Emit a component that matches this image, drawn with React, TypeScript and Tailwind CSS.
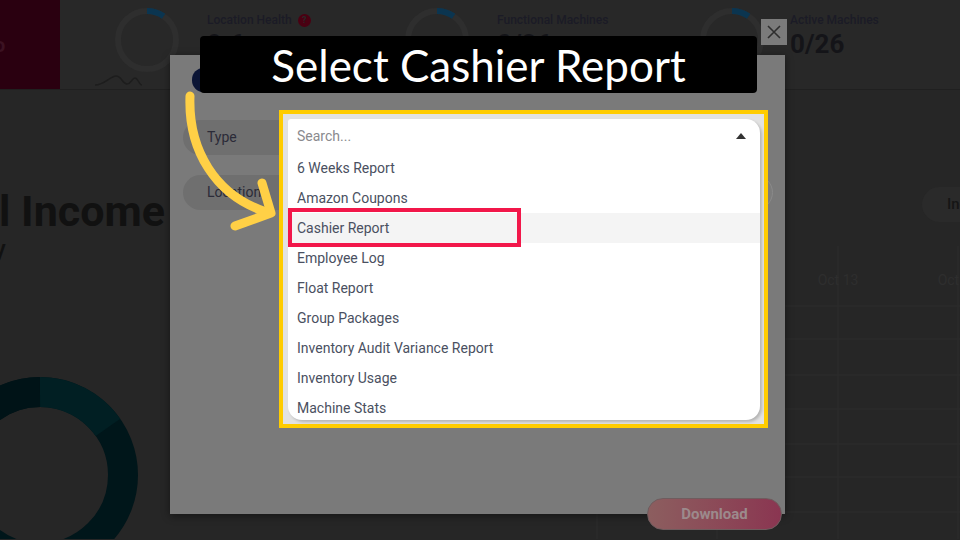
import React from 'react'

const items = [
  '6 Weeks Report',
  'Amazon Coupons',
  'Cashier Report',
  'Employee Log',
  'Float Report',
  'Group Packages',
  'Inventory Audit Variance Report',
  'Inventory Usage',
  'Machine Stats',
]

function Donut({ width, cx }: { width: number; cx: number }) {
  const r = 29
  const a = (35 * Math.PI) / 180
  return (
    <svg width={width} height={90} className="shrink-0">
      <circle cx={cx} cy={40} r={r} fill="none" stroke="#2e2e2e" strokeWidth={6} />
      <path
        d={`M${cx} ${40 - r} A${r} ${r} 0 0 1 ${cx + r * Math.sin(a)} ${40 - r * Math.cos(a)}`}
        fill="none"
        stroke="#0b3550"
        strokeWidth={6}
      />
    </svg>
  )
}

function StatLabel({ label, value, help }: { label: string; value: string; help?: boolean }) {
  return (
    <div className="flex flex-col pt-[12px]">
      <div className="flex items-center gap-[6px] text-[12px] font-medium leading-[16px] text-[#1b1b26]">
        {label}
        {help && (
          <span className="flex h-[13px] w-[13px] items-center justify-center rounded-full bg-[#4a0012] text-[9px] font-bold text-[#282828]">
            ?
          </span>
        )}
      </div>
      <div className="mt-[3px] text-[26px] font-bold leading-none text-[#141418]">{value}</div>
    </div>
  )
}

export default function App() {
  return (
    <div className="relative h-[540px] w-[960px] overflow-hidden bg-[#262626] font-['Roboto',sans-serif]">
      {/* dimmed dashboard */}
      <div className="flex h-[90px] border-b border-[#202020] bg-[#282828]">
        <div className="flex w-[60px] shrink-0 items-center bg-[#2a0010]">
          <span className="ml-[-6px] text-[20px] font-bold text-[#3b1222]">o</span>
        </div>
        <svg width={147} height={90} className="shrink-0">
          <circle cx={87} cy={40} r={29} fill="none" stroke="#2e2e2e" strokeWidth={6} />
          <path d="M87 11 A29 29 0 0 1 103.6 16.2" fill="none" stroke="#0b3550" strokeWidth={6} />
          <path
            d="M35 85 C45 85 50 76 56 76 C62 76 62 84 67 84 C71 84 72 78 75 78 C78 78 79 85 82 85"
            fill="none"
            stroke="#1d1d1d"
            strokeWidth={1.5}
          />
        </svg>
        <div className="w-[195px] shrink-0">
          <StatLabel label="Location Health" value="9.6" help />
        </div>
        <Donut width={95} cx={35} />
        <div className="w-[203px] shrink-0">
          <StatLabel label="Functional Machines" value="0/26" />
        </div>
        <Donut width={90} cx={32} />
        <StatLabel label="Active Machines" value="0/26" />
      </div>

      <div className="flex h-[449px]">
        <div className="flex w-[200px] shrink-0 flex-col">
          <div className="ml-[-1px] mt-[95px] whitespace-nowrap text-[43px] font-bold leading-[53px] text-[#111]">
            l Income
          </div>
          <div className="ml-[-6px] mt-[-4px] text-[24px] font-medium leading-[30px] text-[#111]">y</div>
          <svg width={200} height={165} className="mt-auto">
            <circle cx={40} cy={101} r={83} fill="none" stroke="#00161a" strokeWidth={30} />
            <path d="M40 18 A83 83 0 0 1 108 53.4" fill="none" stroke="#011f23" strokeWidth={30} />
            <path d="M40 18 A83 83 0 0 0 -20 44" fill="none" stroke="#001317" strokeWidth={30} />
          </svg>
        </div>
        <div className="flex flex-1 flex-col">
          <div className="mr-[-60px] mt-[97px] flex h-[36px] w-[98px] items-center self-end rounded-full bg-[#2a2a2a] pl-[25px] text-[15px] font-medium text-[#151515]">
            Income
          </div>
          <svg width={760} height={317} className="shrink-0">
            {[397, 517, 638, 758].map((x) => (
              <line key={x} x1={x} y1={24} x2={x} y2={317} stroke="#2c2c2c" strokeWidth={1} />
            ))}
            {[84, 117, 153, 187, 222, 255, 290].map((y) => (
              <line key={y} x1={360} y1={y} x2={760} y2={y} stroke="#2c2c2c" strokeWidth={1} />
            ))}
            <text x={638} y={63} textAnchor="middle" fontSize={14} fill="#2e2e2e" fontFamily="Roboto">
              Oct 13
            </text>
            <text x={758} y={63} textAnchor="middle" fontSize={14} fill="#2e2e2e" fontFamily="Roboto">
              Oct 14
            </text>
          </svg>
        </div>
      </div>

      {/* modal */}
      <div className="absolute left-[170px] top-[55px] flex h-[459px] w-[615px] flex-col bg-[#7a7a7a] px-[13px] pt-[13px] shadow-[0_2px_8px_rgba(0,0,0,0.45)]">
        <div className="ml-[9px] h-[24px] w-[23px] rounded-full bg-[#0b1535]" />
        <div className="mt-[28px] flex flex-col gap-[20px]">
          <div className="flex h-[35px] w-[580px]">
            <div className="flex w-[107px] items-center rounded-l-full bg-[#6f6f6f] pl-[24px] text-[14px] text-[#2b2b38]">
              Type
            </div>
            <div className="flex-1 rounded-r-full border border-[#8a8a8a] bg-[#7c7c7c]" />
          </div>
          <div className="flex h-[35px] w-[590px]">
            <div className="flex w-[107px] items-center rounded-l-full bg-[#6f6f6f] pl-[24px] text-[14px] text-[#2b2b38]">
              Location
            </div>
            <div className="flex-1 rounded-r-full border border-[#8a8a8a] bg-[#7c7c7c]" />
          </div>
        </div>
        <button className="mb-[-16px] mr-[-10px] mt-auto flex h-[32px] w-[135px] items-center justify-center self-end rounded-full border border-[#6f5c5e] bg-linear-to-r from-[#8c5e5f] to-[#8a3551] text-[15px] font-bold text-[#9c8a8c]">
          Download
        </button>
      </div>

      <div className="absolute left-[761px] top-[19px] flex h-[26px] w-[26px] items-center justify-center bg-[#7b7b7b]">
        <svg width={14} height={14} viewBox="0 0 14 14">
          <path d="M1 1 L13 13 M13 1 L1 13" stroke="#2e2e2e" strokeWidth={1.6} />
        </svg>
      </div>

      {/* tutorial overlay */}
      <div className="absolute left-[200px] top-[36px] flex h-[57px] w-[557px] items-center justify-center rounded-[4px] bg-black font-['Lato',sans-serif] text-[44px] text-white">
        Select Cashier Report
      </div>

      <div className="absolute left-[279px] top-[110px] h-[318px] w-[489px] border-[4px] border-[#ffcc00] bg-[#e2e2e2] pb-[4px] pl-[5px] pr-[4px] pt-[5px]">
        <div className="h-full overflow-hidden rounded-b-[14px] rounded-tl-[3px] rounded-tr-[14px] bg-white shadow-[2px_2px_3px_rgba(0,0,0,0.2)]">
          <div className="flex h-[34px] items-center justify-between pl-[9px] pr-[14px]">
            <span className="text-[14px] text-[#8a8a8e]">Search...</span>
            <svg width={10} height={6} viewBox="0 0 10 6">
              <path d="M0 6 L5 0 L10 6 Z" fill="#333" />
            </svg>
          </div>
          {items.map((item) => (
            <div
              key={item}
              className={`flex h-[30px] items-center pl-[9px] text-[14px] text-[#4a5061] ${item === 'Cashier Report' ? 'bg-[#f4f4f4]' : ''}`}
            >
              {item}
            </div>
          ))}
        </div>
      </div>

      <div className="absolute left-[288px] top-[208px] h-[39px] w-[233px] border-[4px] border-[#f2174a]" />

      <svg width={960} height={540} className="pointer-events-none absolute left-0 top-0">
        <path d="M190 96 C188 150 215 195 266 212" fill="none" stroke="#ffd046" strokeWidth={9} strokeLinecap="round" />
        <path
          d="M262 183 L271 213 L235 226"
          fill="none"
          stroke="#ffd046"
          strokeWidth={9}
          strokeLinecap="round"
          strokeLinejoin="round"
        />
      </svg>
    </div>
  )
}
